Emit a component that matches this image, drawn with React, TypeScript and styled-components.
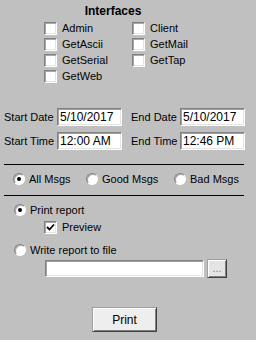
import React from 'react';
import styled, { createGlobalStyle } from 'styled-components';

const GlobalStyle = createGlobalStyle`
  html, body {
    margin: 0;
    padding: 0;
    background: #c0c0c0;
  }
`;

const Dialog = styled.div`
  width: 256px;
  height: 340px;
  background: #c0c0c0;
  font-family: 'Liberation Sans', Arial, sans-serif;
  font-size: 11px;
  color: #000;
  overflow: hidden;
`;

const Heading = styled.div`
  padding: 4px 30px 0 0;
  font-size: 12px;
  font-weight: bold;
  line-height: 14px;
  text-align: center;
`;

const CheckGrid = styled.div`
  display: grid;
  grid-template-columns: 88px auto;
  grid-auto-rows: 13px;
  row-gap: 3px;
  margin-top: 4px;
  padding-left: 44px;
`;

const Option = styled.label<{ $gap?: number; $indent?: number }>`
  display: flex;
  align-items: center;
  gap: ${({ $gap }) => $gap ?? 5}px;
  height: 13px;
  line-height: 13px;
  padding-left: ${({ $indent }) => $indent ?? 0}px;
  white-space: nowrap;
`;

const Box = styled.span`
  position: relative;
  box-sizing: border-box;
  width: 13px;
  height: 13px;
  flex: none;
  background: #fff;
  border: 1px solid;
  border-color: #808080 #fff #fff #808080;
  box-shadow: inset 1px 1px 0 #a8a8a8, inset -1px -1px 0 #e4e4e4;
`;

const Tick = styled.svg`
  position: absolute;
  left: 1px;
  top: 1px;
`;

const Radio = styled.span<{ $on?: boolean }>`
  position: relative;
  box-sizing: border-box;
  width: 12px;
  height: 12px;
  flex: none;
  border-radius: 50%;
  background: #fff;
  border: 1px solid;
  border-color: #808080 #fff #fff #808080;
  box-shadow: inset 1px 1px 0 #a8a8a8;

  &::after {
    content: '';
    display: ${({ $on }) => ($on ? 'block' : 'none')};
    position: absolute;
    left: 3px;
    top: 3px;
    width: 4px;
    height: 4px;
    border-radius: 50%;
    background: #000;
  }
`;

const DateGrid = styled.div`
  display: grid;
  grid-template-columns: 53px 74px 49px 65px;
  grid-auto-rows: 18px;
  row-gap: 6px;
  align-items: center;
  margin-top: 25px;
  padding-left: 4px;
`;

const FieldLabel = styled.span`
  white-space: nowrap;
`;

const TextBox = styled.input<{ $w: number; $h: number }>`
  box-sizing: border-box;
  width: ${({ $w }) => $w}px;
  height: ${({ $h }) => $h}px;
  margin: 0;
  padding: 0 0 0 2px;
  background: #fff;
  border: 1px solid;
  border-color: #808080 #fff #fff #808080;
  box-shadow: inset 1px 1px 0 #a0a0a0, inset -1px -1px 0 #e4e4e4;
  font-family: 'Liberation Sans', Arial, sans-serif;
  font-size: 12px;
  color: #000;
  outline: none;
`;

const Rule = styled.hr<{ $top: number }>`
  width: 240px;
  height: 0;
  margin: ${({ $top }) => $top}px 0 0 4px;
  border: none;
  border-top: 1px solid #000;
`;

const RadioRow = styled.div`
  display: grid;
  grid-template-columns: 73px 88px auto;
  margin-top: 8px;
  padding-left: 13px;
`;

const RadioOption = styled(Option)`
  height: 12px;
  line-height: 12px;
`;

const OutputGroup = styled.div`
  display: flex;
  flex-direction: column;
  margin-top: 8px;
  padding-left: 14px;
`;

const FileRow = styled.div`
  display: flex;
  align-items: center;
  gap: 3px;
  margin-top: 3px;
  padding-left: 45px;
`;

const Spaced = styled.div<{ $top: number }>`
  margin-top: ${({ $top }) => $top}px;
`;

const Button = styled.button<{ $w: number; $h: number; $muted?: boolean }>`
  box-sizing: border-box;
  width: ${({ $w }) => $w}px;
  height: ${({ $h }) => $h}px;
  margin: 0;
  padding: 0;
  background: ${({ $muted }) => ($muted ? '#e4e4e4' : '#eeeeee')};
  border: 1px solid;
  border-color: #a0a0a0 #404040 #404040 #a0a0a0;
  box-shadow: inset 1px 1px 0 #fff, inset -1px -1px 0 #808080;
  font-family: 'Liberation Sans', Arial, sans-serif;
  font-size: ${({ $muted }) => ($muted ? 11 : 12)}px;
  color: ${({ $muted }) => ($muted ? '#808080' : '#000')};
  line-height: 1;
`;

const ButtonRow = styled.div`
  margin-top: 29px;
  padding-left: 92px;
`;

const Check = () => (
  <Tick width="9" height="9" viewBox="0 0 9 9">
    <path d="M1 4 L3.5 6.5 L8 1.5" fill="none" stroke="#000" strokeWidth="1.8" />
  </Tick>
);

const interfaces = ['Admin', 'Client', 'GetAscii', 'GetMail', 'GetSerial', 'GetTap', 'GetWeb'];

export default function App() {
  return (
    <Dialog>
      <GlobalStyle />
      <Heading>Interfaces</Heading>
      <CheckGrid>
        {interfaces.map((name) => (
          <Option key={name}>
            <Box />
            {name}
          </Option>
        ))}
      </CheckGrid>

      <DateGrid>
        <FieldLabel>Start Date</FieldLabel>
        <TextBox $w={65} $h={18} readOnly value="5/10/2017" />
        <FieldLabel>End Date</FieldLabel>
        <TextBox $w={65} $h={18} readOnly value="5/10/2017" />
        <FieldLabel>Start Time</FieldLabel>
        <TextBox $w={65} $h={18} readOnly value="12:00 AM" />
        <FieldLabel>End Time</FieldLabel>
        <TextBox $w={65} $h={18} readOnly value="12:46 PM" />
      </DateGrid>

      <Rule $top={14} />
      <RadioRow>
        <RadioOption $gap={4}>
          <Radio $on />
          All Msgs
        </RadioOption>
        <RadioOption $gap={4}>
          <Radio />
          Good Msgs
        </RadioOption>
        <RadioOption $gap={4}>
          <Radio />
          Bad Msgs
        </RadioOption>
      </RadioRow>
      <Rule $top={10} />

      <OutputGroup>
        <RadioOption $gap={4}>
          <Radio $on />
          Print report
        </RadioOption>
        <Spaced $top={5}>
          <Option $indent={30}>
            <Box>
              <Check />
            </Box>
            Preview
          </Option>
        </Spaced>
        <Spaced $top={10}>
          <RadioOption $gap={4}>
            <Radio />
            Write report to file
          </RadioOption>
        </Spaced>
      </OutputGroup>
      <FileRow>
        <TextBox $w={159} $h={17} readOnly value="" />
        <Button $w={20} $h={19} $muted>
          ...
        </Button>
      </FileRow>

      <ButtonRow>
        <Button $w={65} $h={25}>
          Print
        </Button>
      </ButtonRow>
    </Dialog>
  );
}
